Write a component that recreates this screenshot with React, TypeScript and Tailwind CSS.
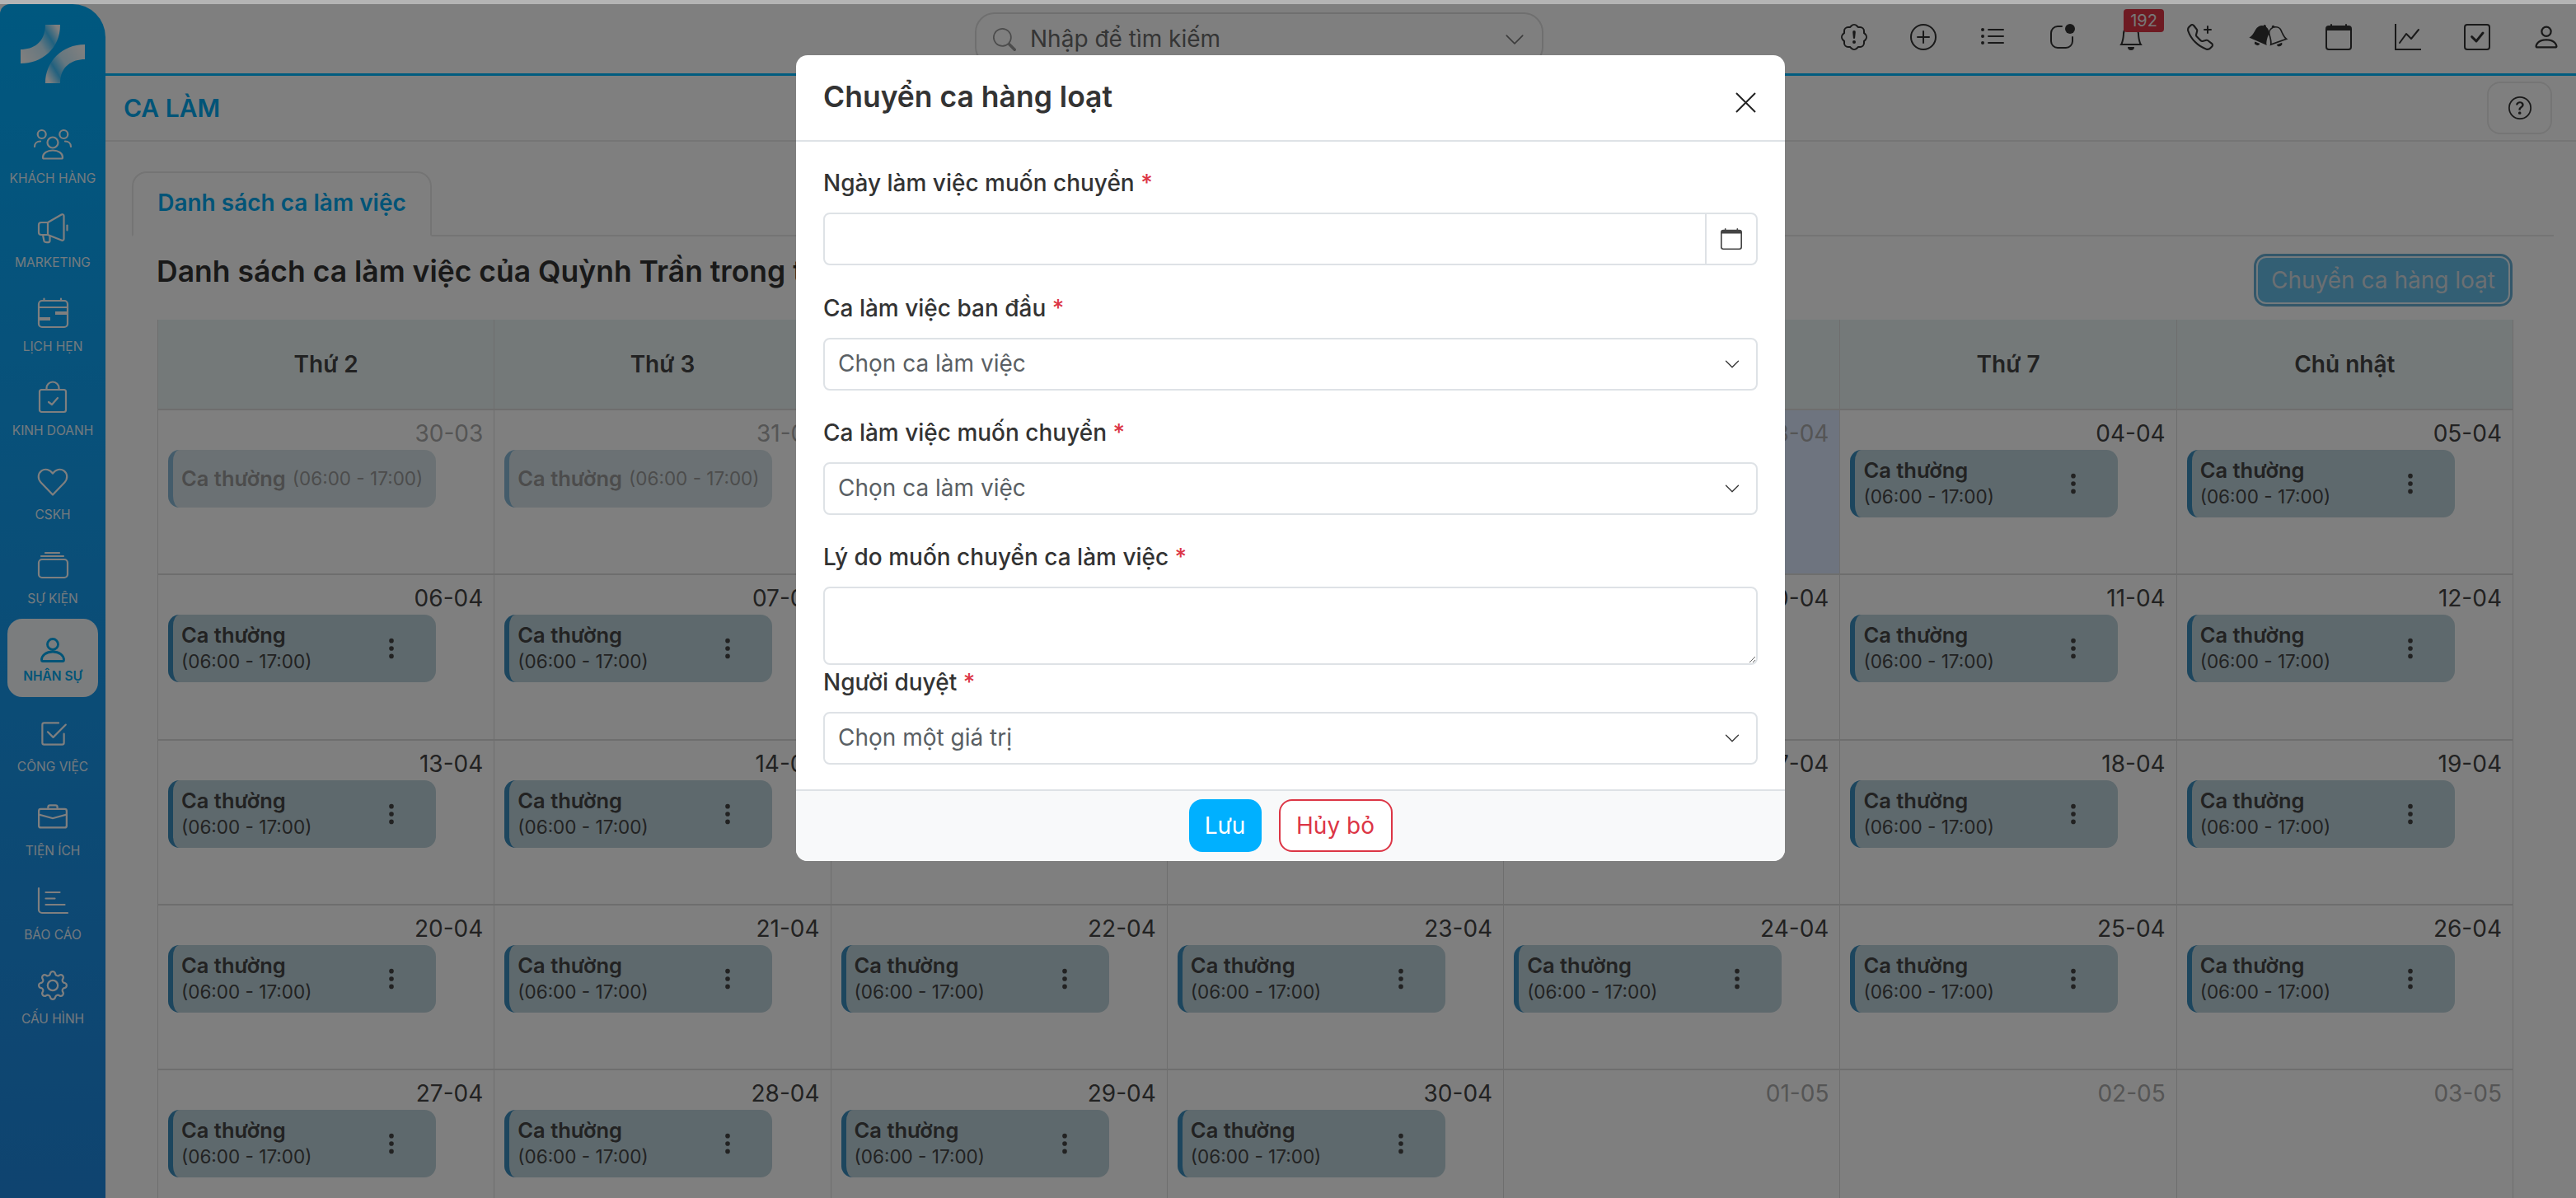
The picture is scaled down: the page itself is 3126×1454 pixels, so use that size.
import React from "react";
import {
  BsPatchExclamation, BsPlusCircle, BsListUl, BsAppIndicator, BsBell, BsBellFill, BsTelephonePlus,
  BsCalendar, BsGraphUp, BsCheckSquare, BsPerson, BsSearch, BsChevronDown, BsThreeDotsVertical,
  BsQuestionCircle, BsCheck2Square, BsBriefcase, BsGear,
} from "react-icons/bs";

const S = ({ children, className = "" }: { children: React.ReactNode; className?: string }) => (
  <svg width="48" height="48" viewBox="0 0 48 48" fill="none" stroke="currentColor" strokeWidth="2.2" strokeLinecap="round" strokeLinejoin="round" className={className}>{children}</svg>
);

const People = () => (
  <S>
    <circle cx="10.7" cy="11" r="5" /><circle cx="37.3" cy="11" r="5" /><circle cx="24" cy="21" r="6.5" />
    <path d="M2 26c0-4 3-6.5 7-6.5" /><path d="M46 26c0-4-3-6.5-7-6.5" />
    <path d="M12 39c0-5 5-8.5 12-8.5s12 3.5 12 8.5c0 1-.5 1.5-1.5 1.5h-21c-1 0-1.5-.5-1.5-1.5z" />
  </S>
);
const Mega = () => (
  <S>
    <path d="M18 16h-8a3 3 0 0 0-3 3v9a3 3 0 0 0 3 3h8z" />
    <path d="M18 16 34.5 6.5c1.5-.8 3 0 3 1.5v28c0 1.500-1.500 2.300-3 1.500L18 31" />
    <path d="M12 31l1.500 7.500c.5 2 6.500 2.500 7 0V33" />
    <path d="M41.500 19.500v6" />
  </S>
);
const Card = () => (
  <S>
    <rect x="7" y="9" width="35" height="32" rx="4" />
    <path d="M7 17h35M13.500 6.500V9M34 6.500V9" />
    <path d="M27 24h15M7 31h14" strokeWidth="4" strokeLinecap="butt" />
  </S>
);
const Bag = () => (
  <S>
    <rect x="8" y="15" width="32" height="27" rx="2.500" />
    <path d="M16.500 15v-2a7.500 7.500 0 0 1 15 0v2" />
    <path d="M19 30l4 3 7-8" />
  </S>
);
const Heart = () => (
  <S><path d="M24 40.500 9.600 25.400C5.400 21 6 14.600 10.400 11.400c4.200-3 10-1.800 13.600 3.200 3.600-5 9.400-6.200 13.600-3.200 4.400 3.200 5 9.600.8 14L24 40.500z" /></S>
);
const Stack = () => (
  <S>
    <rect x="7" y="17" width="35" height="22" rx="4" />
    <path d="M10 13h27M15 9h17" />
  </S>
);
const Person = () => (
  <S className="[stroke-width:2.8]">
    <circle cx="24" cy="18" r="6.500" />
    <path d="M10.500 37c0-5.500 5.500-10 13.500-10s13.500 4.500 13.500 10c0 1-.6 1.500-1.500 1.500H12c-.9 0-1.500-.5-1.500-1.500z" />
  </S>
);
const Chart = () => (
  <S>
    <path d="M7 8v26a4 4 0 0 0 4 4h31" />
    <path d="M15.500 13h17M15.500 20.500h11M15.500 28h23" />
  </S>
);

const Logo = () => (
  <svg width="78" height="71" viewBox="25 30 78 71">
    <defs>
      <linearGradient id="logoB" x1="1" y1="0.2" x2="0" y2="0.8">
        <stop offset="0" stopColor="#fff" /><stop offset="0.5" stopColor="#fff" stopOpacity="0.8" /><stop offset="0.75" stopColor="#fff" stopOpacity="0.25" /><stop offset="1" stopColor="#fff" />
      </linearGradient>
      <linearGradient id="logoC" x1="0" y1="0.8" x2="1" y2="0.2">
        <stop offset="0" stopColor="#fff" /><stop offset="0.5" stopColor="#fff" stopOpacity="0.8" /><stop offset="0.75" stopColor="#fff" stopOpacity="0.25" /><stop offset="1" stopColor="#fff" />
      </linearGradient>
    </defs>
    <path d="M55 30H73C73 60 50 77 25 77V60C40 60 55 52 55 30Z" fill="url(#logoC)" />
    <path d="M103 54V72C88 72 73 80 73 101H55C55 75 75 54 103 54Z" fill="url(#logoB)" />
  </svg>
);

const nav: { label: string; icon: React.ReactNode; active?: boolean }[] = [
  { label: "KHÁCH HÀNG", icon: <People /> },
  { label: "MARKETING", icon: <Mega /> },
  { label: "LỊCH HẸN", icon: <Card /> },
  { label: "KINH DOANH", icon: <Bag /> },
  { label: "CSKH", icon: <Heart /> },
  { label: "SỰ KIỆN", icon: <Stack /> },
  { label: "NHÂN SỰ", icon: <Person />, active: true },
  { label: "CÔNG VIỆC", icon: <BsCheck2Square size={35} /> },
  { label: "TIỆN ÍCH", icon: <BsBriefcase size={36} /> },
  { label: "BÁO CÁO", icon: <Chart /> },
  { label: "CẤU HÌNH", icon: <BsGear size={36} /> },
];

type Cell = { d: string; kind: "old" | "on" | "none"; today?: boolean };
const rows: Cell[][] = [
  [
    { d: "30-03", kind: "old" }, { d: "31-03", kind: "old" }, { d: "01-04", kind: "old" }, { d: "02-04", kind: "old" },
    { d: "03-04", kind: "old", today: true }, { d: "04-04", kind: "on" }, { d: "05-04", kind: "on" },
  ],
  ["06", "07", "08", "09", "10", "11", "12"].map((n) => ({ d: `${n}-04`, kind: "on" as const })),
  ["13", "14", "15", "16", "17", "18", "19"].map((n) => ({ d: `${n}-04`, kind: "on" as const })),
  ["20", "21", "22", "23", "24", "25", "26"].map((n) => ({ d: `${n}-04`, kind: "on" as const })),
  [
    { d: "27-04", kind: "on" }, { d: "28-04", kind: "on" }, { d: "29-04", kind: "on" }, { d: "30-04", kind: "on" },
    { d: "01-05", kind: "none" }, { d: "02-05", kind: "none" }, { d: "03-05", kind: "none" },
  ],
];
const days = ["Thứ 2", "Thứ 3", "Thứ 4", "Thứ 5", "Thứ 6", "Thứ 7", "Chủ nhật"];

const Shift = () => (
  <div className="ml-[12px] mt-[2px] flex h-[82px] w-[325px] items-center justify-between rounded-[14px] border-l-[6px] border-[#3a8cbc] bg-[#bcd2da] pl-[10px] pr-[39px] text-[#444]">
    <div>
      <div className="text-[25.5px] font-semibold leading-[32px]">Ca thường</div>
      <div className="text-[22.5px] leading-[32px]">(06:00 - 17:00)</div>
    </div>
    <BsThreeDotsVertical size={30} className="text-[#444]" />
  </div>
);
const OldShift = () => (
  <div className="ml-[12px] mt-[2px] flex h-[70px] w-[325px] items-center whitespace-nowrap rounded-[14px] border-l-[6px] border-[#3a8cbc] bg-[#bcd2da] pl-[10px] text-[#555] opacity-60">
    <span className="text-[25.5px] font-semibold">Ca thường</span>
    <span className="ml-[8px] text-[22.5px]">(06:00 - 17:00)</span>
  </div>
);

const Label = ({ children, className = "" }: { children: React.ReactNode; className?: string }) => (
  <div className={`h-[40px] pt-[1px] text-[28px] font-medium leading-[40px] text-[#333] ${className}`}>
    {children} <span className="text-[#dc3545]">*</span>
  </div>
);
const SelectBox = ({ text }: { text: string }) => (
  <div className="flex h-[64px] items-center justify-between rounded-[8px] border-2 border-[#dee2e6] pl-[16px] pr-[19px] text-[28px] text-[#5a5f64]">
    <span className="pb-[3px]">{text}</span>
    <BsChevronDown size={20} className="text-[#333]" />
  </div>
);

export default function App() {
  return (
    <div className="relative h-[1454px] w-[3126px] overflow-hidden bg-[#b4b4b4] pt-[5px] font-['Inter',sans-serif] text-[#333]">
      <div className="flex h-[1449px] bg-white">
        <aside className="flex h-full w-[128px] shrink-0 flex-col rounded-tl-[12px] rounded-tr-[40px] bg-gradient-to-b from-[#00b0ff] to-[#1e88e0] text-[#fff]">
          <div className="ml-[25px] mt-[25px] h-[71px] w-[78px]"><Logo /></div>
          <div className="mt-[38px] flex flex-col gap-[7px]">
            {nav.map((n) => (
              <div key={n.label} className={`mx-[9px] flex h-[95px] flex-col items-center rounded-[18px] pt-[13px] ${n.active ? "bg-[#f6fbfd] text-[#00a8ee]" : ""}`}>
                <div className="flex h-[48px] w-[48px] items-center justify-center">{n.icon}</div>
                <div className={`whitespace-nowrap text-[15.5px] leading-[20px] ${n.active ? "-mt-[1px] font-semibold" : "mt-[7px] opacity-90"}`}>{n.label}</div>
              </div>
            ))}
          </div>
        </aside>
        <div className="flex min-w-0 flex-1 flex-col">
          <header className="flex h-[87px] shrink-0 items-center border-b-[3px] border-[#00b8ff] pb-[4px]">
            <div className="ml-[1055px] mt-[5px] flex h-[66px] w-[690px] items-center rounded-[24px] border-2 border-[#dedede] pl-[20px] pr-[20px]">
              <BsSearch size={28} className="text-[#999]" />
              <span className="ml-[17px] flex-1 pb-[2px] text-[28px] text-[#6a6a6a]">Nhập để tìm kiếm</span>
              <BsChevronDown size={26} className="text-[#777]" />
            </div>
            <div className="ml-auto mr-[20px] flex items-center gap-[52px] text-[#333]">
              <BsPatchExclamation size={32} />
              <BsPlusCircle size={32} />
              <BsListUl size={32} />
              <BsAppIndicator size={32} />
              <span className="relative block h-[32px] w-[32px]">
                <BsBell size={32} />
                <span className="absolute -top-[18px] left-[7px] flex h-[28px] w-[49px] items-center justify-center rounded-[4px] bg-[#dc3545] text-[20px] text-[#eee]">192</span>
              </span>
              <BsTelephonePlus size={32} />
              <span className="relative block h-[32px] w-[32px]">
                <BsBellFill size={27} className="absolute -left-[8px] top-[0px] rotate-[24deg]" />
                <span className="absolute left-[11px] top-[1px] rotate-[-20deg]">
                  <BsBellFill size={27} className="absolute left-0 top-0 text-white" />
                  <BsBell size={27} className="relative" />
                </span>
              </span>
              <BsCalendar size={32} />
              <BsGraphUp size={32} />
              <BsCheckSquare size={32} />
              <BsPerson size={36} className="-mx-[2px]" />
            </div>
          </header>
          <div className="flex h-[80px] shrink-0 items-center justify-between border-b-2 border-[#eaeaea] pl-[22px] pr-[29px]">
            <h1 className="text-[30px] font-semibold text-[#00a8ee]">CA LÀM</h1>
            <div className="flex h-[64px] w-[79px] items-center justify-center rounded-[16px] border-2 border-[#eaeaea]"><BsQuestionCircle size={28} /></div>
          </div>
          <div className="ml-[32px] mr-[27px] mt-[36px] flex h-[79px] shrink-0 border-b-2 border-[#e8e8e8]">
            <div className="-mb-[2px] flex h-[79px] w-[364px] items-center justify-center rounded-t-[18px] border-x-2 border-t-2 border-b-2 border-[#e8e8e8] border-b-white bg-white pb-[4px] text-[28px] font-semibold text-[#00a8ee]">Danh sách ca làm việc</div>
          </div>
          <div className="flex h-[101px] shrink-0 items-start justify-between pl-[62px] pr-[80px] pt-[19px]">
            <h2 className="-mt-[1px] whitespace-nowrap text-[35.5px] font-semibold leading-[50px] text-[#333]">Danh sách ca làm việc của Quỳnh Trần trong tháng 04/2026</h2>
            <button className="mt-[5px] h-[58px] w-[308px] rounded-[12px] border-2 border-[#e8f4fa] bg-[#66bee9] text-[28px] text-[#d6dfe5] outline-[3px] outline-[#66aed4]">Chuyển ca hàng loạt</button>
          </div>
          <div className="ml-[63px] w-[2859px]">
            <div className="grid h-[110px] grid-cols-7 border-l border-[#dcdcdc] bg-[#e8f2f3]">
              {days.map((d) => (
                <div key={d} className="flex items-center justify-center border-b-2 border-r border-[#dcdcdc] text-[28px] font-semibold text-[#444]">{d}</div>
              ))}
            </div>
            {rows.map((r, i) => (
              <div key={i} className="grid h-[200.3px] grid-cols-7 border-l border-[#dcdcdc]">
                {r.map((c) => (
                  <div key={c.d} className={`border-b-2 border-r border-[#dcdcdc] pt-[10px] ${c.today ? "bg-[#dce8ff]" : ""}`}>
                    <div className={`pr-[13px] text-right text-[28px] leading-[36px] ${c.kind === "on" ? "text-[#444]" : "text-[#aaa]"}`}>{c.d}</div>
                    {c.kind === "on" && <Shift />}
                    {c.kind === "old" && <OldShift />}
                  </div>
                ))}
              </div>
            ))}
          </div>
        </div>
      </div>

      <div className="absolute inset-x-0 bottom-0 top-[5px] bg-black/50">
        <div className="ml-[966px] mt-[62px] w-[1200px] overflow-hidden rounded-[14px] bg-white">
          <div className="flex h-[105px] items-center justify-between border-b-2 border-[#dee2e6] pl-[33px] pr-[35px]">
            <h3 className="pb-[2px] text-[35.5px] font-semibold text-[#333]">Chuyển ca hàng loạt</h3>
            <svg width="25" height="25" viewBox="0 0 25 25" stroke="#222" strokeWidth="2" className="mt-[12px]"><path d="M1 1l23 23M24 1L1 24" /></svg>
          </div>
          <div className="px-[33px] pb-[30px] pt-[29px]">
            <Label className="mb-[17px]">Ngày làm việc muốn chuyển</Label>
            <div className="mb-[31px] flex h-[64px] rounded-[8px] border-2 border-[#dee2e6]">
              <input className="min-w-0 flex-1 outline-none" />
              <div className="flex w-[62px] items-center justify-center border-l-2 border-[#dee2e6]"><BsCalendar size={26} className="text-[#444]" /></div>
            </div>
            <Label className="mb-[17px]">Ca làm việc ban đầu</Label>
            <div className="mb-[30px]"><SelectBox text="Chọn ca làm việc" /></div>
            <Label className="mb-[17px]">Ca làm việc muốn chuyển</Label>
            <div className="mb-[30px]"><SelectBox text="Chọn ca làm việc" /></div>
            <Label className="mb-[17px]">Lý do muốn chuyển ca làm việc</Label>
            <textarea className="block h-[95px] w-full rounded-[8px] border-2 border-[#dee2e6] outline-none" />
            <Label className="mb-[17px]">Người duyệt</Label>
            <SelectBox text="Chọn một giá trị" />
          </div>
          <div className="flex h-[87px] justify-center gap-[21px] border-t-2 border-[#dee2e6] bg-[#f8f9fa] pt-[10px]">
            <button className="h-[64px] w-[88px] rounded-[16px] bg-[#00b0ff] text-[28px] text-white">Lưu</button>
            <button className="h-[64px] w-[138px] rounded-[16px] border-2 border-[#dc3545] bg-white text-[28px] text-[#dc3545]">Hủy bỏ</button>
          </div>
        </div>
      </div>
    </div>
  );
}
